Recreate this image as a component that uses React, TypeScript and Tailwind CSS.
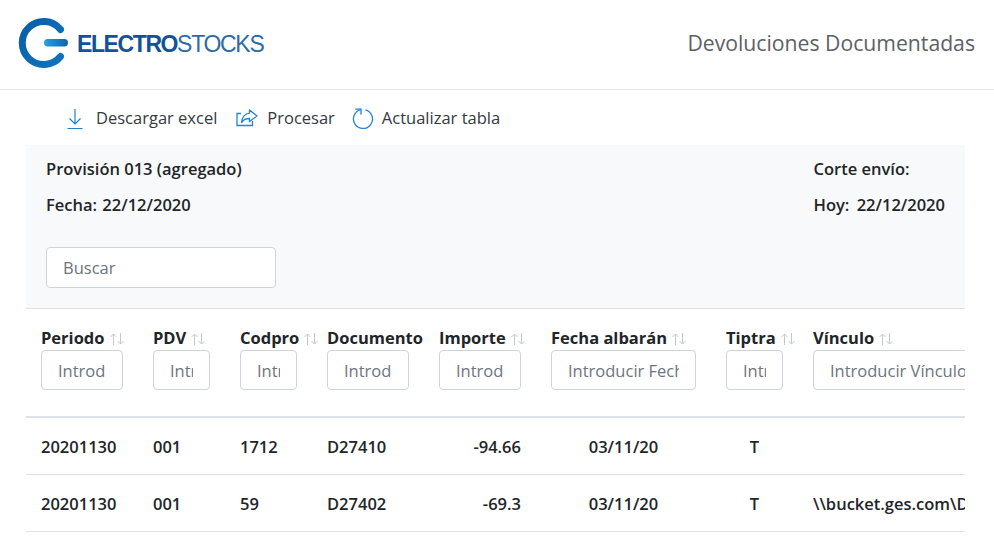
import React from "react";

const font = "font-['Open_Sans','Noto_Sans',sans-serif]";

const Sort = () => (
  <svg width="16" height="14" viewBox="0 0 16 14" fill="none" stroke="#c4c8cc" strokeWidth="1" className="inline-block ml-1 -mt-0.5">
    <path d="M4.500 13V2M1.500 5l3-3 3 3" />
    <path d="M11.500 1v11M8.500 9l3 3 3-3" />
  </svg>
);

const columns = [
  { label: "Periodo", ph: "Introducir Periodo", width: "w-[112px]", sort: true },
  { label: "PDV", ph: "Introducir PDV", width: "w-[87px]", sort: true },
  { label: "Codpro", ph: "Introducir Codpro", width: "w-[87px]", sort: true },
  { label: "Documento", ph: "Introducir Documento", width: "w-[112px]", sort: false },
  { label: "Importe", ph: "Introducir Importe", width: "w-[112px]", sort: true },
  { label: "Fecha albarán", ph: "Introducir Fecha albarán", width: "w-[175px]", sort: true },
  { label: "Tiptra", ph: "Introducir Tiptra", width: "w-[87px]", sort: true },
  { label: "Vínculo", ph: "Introducir Vínculo", width: "w-[200px]", sort: true },
];

const rows = [
  ["20201130", "001", "1712", "D27410", "-94.66", "03/11/20", "T", ""],
  ["20201130", "001", "59", "D27402", "-69.3", "03/11/20", "T", "\\\\bucket.ges.com\\D27402.pdf"],
];

const Logo = () => (
  <div className="flex items-center mb-[3px]">
    <svg width="56" height="52" viewBox="0 0 56 52" fill="none">
      <defs>
        <linearGradient id="ring" x1="0" y1="0" x2="1" y2="1">
          <stop offset="0" stopColor="#0a5ea8" />
          <stop offset="1" stopColor="#0f74bd" />
        </linearGradient>
        <linearGradient id="bar" x1="0" y1="0" x2="1" y2="0">
          <stop offset="0" stopColor="#2a9fe0" />
          <stop offset="1" stopColor="#0b65ae" />
        </linearGradient>
      </defs>
      <path d="M42.500 12.500A21.500 21.500 0 1 0 42.500 39.500" stroke="url(#ring)" strokeWidth="7" strokeLinecap="round" />
      <rect x="26" y="22" width="24" height="7.500" rx="3.700" fill="url(#bar)" />
    </svg>
    <span className="ml-[3px] mt-[3px] text-[23px] leading-none text-[#11539b] font-['Liberation_Sans',sans-serif]">
      <span className="font-bold tracking-[-1.4px]">ELECTRO</span>
      <span className="tracking-[-1.3px] text-[#2c6ba5]">STOCKS</span>
    </span>
  </div>
);

export default function App() {
  return (
    <div className={`${font} w-[994px] h-[551px] overflow-hidden bg-white text-[#212529] text-[16.5px]`}>
      <header className="h-[90px] border-b border-[#e3e5e7] flex items-center justify-between pl-[18px] pr-[19px]">
        <Logo />
        <h1 className="mb-[4px] text-[21.2px] text-[#5c6166]">Devoluciones Documentadas</h1>
      </header>

      <div className="px-[26px] w-[991px]">
        <div className="h-[55px] pt-[2px] flex items-center pl-[40px] text-[#343a40]">
          <button className="flex items-center">
            <svg width="18" height="22" viewBox="0 0 18 22" fill="none" stroke="#1e80d0" strokeWidth="1.2">
              <path d="M9 1v15M3.500 10.500 9 16l5.500-5.500M1.500 20.500h15" />
            </svg>
            <span className="ml-[12px]">Descargar excel</span>
          </button>
          <button className="flex items-center ml-[19px]">
            <svg width="22" height="20" viewBox="0 0 22 20" fill="none" stroke="#2584d8" strokeWidth="1.3">
              <path d="M5 4.500H1V16.500H16.500V12" />
              <path d="M13.500 1 21 7l-7.500 5.500v-3c-3.500 0-6.500 1-8 4.500 0-5.500 3.500-9.500 8-9.800z" />
            </svg>
            <span className="ml-[9px]">Procesar</span>
          </button>
          <button className="flex items-center ml-[17px]">
            <svg width="22" height="22" viewBox="0 0 22 22" fill="none" stroke="#2584d8" strokeWidth="1.3">
              <path d="M13.500 1.800A9.500 9.500 0 1 1 8.800 1.700" />
              <path d="M3.200 1.200H9V6.800" />
            </svg>
            <span className="ml-[8px]">Actualizar tabla</span>
          </button>
        </div>

        <section className="h-[164px] bg-[#f8f9fa] border-b border-[#dee2e6] px-[20px] pt-[13px]">
          <div className="flex justify-between font-semibold leading-[22px]">
            <div>
              <p>Provisión 013 (agregado)</p>
              <p className="mt-[14px] [word-spacing:1px]">Fecha: 22/12/2020</p>
            </div>
            <div>
              <p>Corte envío:</p>
              <p className="mt-[14px] [word-spacing:3px]">Hoy: 22/12/2020</p>
            </div>
          </div>
          <input
            placeholder="Buscar"
            className="mt-[31px] block w-[230px] h-[41px] px-4 bg-white border border-[#ced4da] rounded-[4px] placeholder:text-[#6c757d]"
          />
        </section>

        <div className="overflow-hidden">
          <table className="table-fixed border-collapse w-[972px]">
            <thead>
              <tr className="border-b-2 border-[#dee2e6]">
                {columns.map((c) => (
                  <th key={c.label} className={`${c.width} h-[107px] px-[15px] pt-[19px] pb-[26px] text-left align-top font-bold whitespace-nowrap`}>
                    <div className="leading-[20px] h-[22px]">
                      {c.label}
                      {c.sort && <Sort />}
                    </div>
                    <input
                      placeholder={c.ph}
                      className="block w-full h-[40px] px-4 bg-white border border-[#ced4da] rounded-[4px] font-normal placeholder:text-[#6c757d]"
                    />
                  </th>
                ))}
              </tr>
            </thead>
            <tbody>
              {rows.map((r, i) => (
                <tr key={i} className="border-b border-[#dee2e6] h-[57px] font-semibold">
                  {r.map((v, j) => (
                    <td
                      key={j}
                      className={`px-[15px] pt-[3px] whitespace-nowrap ${j === 4 ? "text-right" : ""} ${j === 5 || j === 6 ? "text-center" : ""}`}
                    >
                      {v}
                    </td>
                  ))}
                </tr>
              ))}
            </tbody>
          </table>
        </div>
      </div>
    </div>
  );
}
